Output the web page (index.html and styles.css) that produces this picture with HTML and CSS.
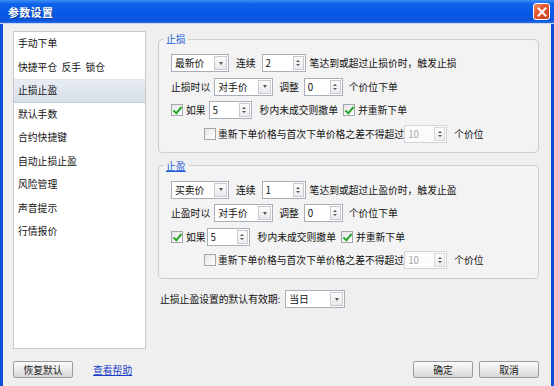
FILE: index.html
```html
<!DOCTYPE html>
<html lang="zh-CN">
<head>
    <meta charset="UTF-8">
    <title>参数设置</title>
    <link rel="stylesheet" href="styles.css">
</head>
<body>

<div class="window">
    <div class="titlebar">
        <span class="title">参数设置</span>
        <span class="close-btn">
            <svg width="10" height="10" viewBox="0 0 10 10"><path d="M1.5 1.5 L8.5 8.5 M8.5 1.5 L1.5 8.5" stroke="#fff" stroke-width="2" stroke-linecap="square"/></svg>
        </span>
    </div>

    <div class="frame">
        <div class="top-row">
            <ul class="sidebar">
                <li>手动下单</li>
                <li>快捷平仓&nbsp; 反手&nbsp; 锁仓</li>
                <li class="active">止损止盈</li>
                <li>默认手数</li>
                <li>合约快捷键</li>
                <li>自动止损止盈</li>
                <li>风险管理</li>
                <li>声音提示</li>
                <li>行情报价</li>
            </ul>

            <div class="panel">
                <fieldset class="group">
                    <legend>止损</legend>
                    <div class="row">
                        <div class="select w58"><span class="value">最新价</span><span class="drop"></span></div>
                        <span class="lbl ml7">连续</span>
                        <div class="spin w44 ml6"><span class="value">2</span><span class="arrows"></span></div>
                        <span class="lbl ml4">笔达到或超过止损价时，触发止损</span>
                    </div>
                    <div class="row">
                        <span class="lbl">止损时以</span>
                        <div class="select w59 ml4"><span class="value">对手价</span><span class="drop"></span></div>
                        <span class="lbl ml6">调整</span>
                        <div class="spin w39 ml5"><span class="value">0</span><span class="arrows"></span></div>
                        <span class="lbl ml6">个价位下单</span>
                    </div>
                    <div class="row">
                        <span class="check on"></span>
                        <span class="lbl ml3">如果</span>
                        <div class="spin w43 ml3"><span class="value">5</span><span class="arrows"></span></div>
                        <span class="lbl ml8">秒内未成交则撤单</span>
                        <span class="check on ml5"></span>
                        <span class="lbl ml3">并重新下单</span>
                    </div>
                    <div class="row indent">
                        <span class="check"></span>
                        <span class="lbl ml2">重新下单价格与首次下单价格之差不得超过</span>
                        <div class="spin w43 disabled"><span class="value">10</span><span class="arrows"></span></div>
                        <span class="lbl ml7">个价位</span>
                    </div>
                </fieldset>

                <fieldset class="group second">
                    <legend class="underline">止盈</legend>
                    <div class="row">
                        <div class="select w58"><span class="value">买卖价</span><span class="drop"></span></div>
                        <span class="lbl ml7">连续</span>
                        <div class="spin w44 ml6"><span class="value">1</span><span class="arrows"></span></div>
                        <span class="lbl ml4">笔达到或超过止盈价时，触发止盈</span>
                    </div>
                    <div class="row">
                        <span class="lbl">止盈时以</span>
                        <div class="select w59 ml4"><span class="value">对手价</span><span class="drop"></span></div>
                        <span class="lbl ml6">调整</span>
                        <div class="spin w39 ml5"><span class="value">0</span><span class="arrows"></span></div>
                        <span class="lbl ml6">个价位下单</span>
                    </div>
                    <div class="row">
                        <span class="check on"></span>
                        <span class="lbl ml3">如果</span>
                        <div class="spin w43 ml1"><span class="value">5</span><span class="arrows"></span></div>
                        <span class="lbl ml8">秒内未成交则撤单</span>
                        <span class="check on ml5"></span>
                        <span class="lbl ml3">并重新下单</span>
                    </div>
                    <div class="row indent">
                        <span class="check"></span>
                        <span class="lbl ml2">重新下单价格与首次下单价格之差不得超过</span>
                        <div class="spin w43 disabled"><span class="value">10</span><span class="arrows"></span></div>
                        <span class="lbl ml7">个价位</span>
                    </div>
                </fieldset>

                <div class="row default-row">
                    <span class="lbl">止损止盈设置的默认有效期:</span>
                    <div class="select w60 ml5"><span class="value">当日</span><span class="drop"></span></div>
                </div>
            </div>
        </div>

        <div class="footer">
            <button class="btn">恢复默认</button>
            <a class="help-link">查看帮助</a>
            <span class="spacer"></span>
            <button class="btn">确定</button>
            <button class="btn ml6">取消</button>
        </div>
    </div>
</div>

</body>
</html>
```

FILE: styles.css
```css
/* Основа */
body {
    margin: 0;
    font-family: 'Noto Sans CJK SC', 'Noto Sans', sans-serif;
    font-size: 9.8px;
    color: #111;
    background: #ffffff;
}
.window {
    width: 554px;
    height: 386px;
    display: flex;
    flex-direction: column;
    background: linear-gradient(90deg, #0a4fd5, #0b5be3 50%, #0a4fd5);
}

/* Заголовок окна */
.titlebar {
    height: 24px;
    display: flex;
    align-items: center;
    padding: 0 3px 0 8px;
    background: linear-gradient(#3c8ef7, #0c62ea 18%, #0858e6 60%, #0a55dc 90%, #2a6fe6);
    border-bottom: 1px solid #c8d7f2;
    box-sizing: border-box;
}
.title {
    color: #fff;
    font-weight: bold;
    font-size: 11px;
    letter-spacing: 0.3px;
    text-shadow: 1px 1px 0 #0a3a9a;
    flex: 1;
}
.close-btn {
    width: 15px;
    height: 15px;
    display: flex;
    align-items: center;
    justify-content: center;
    border: 1px solid #fff;
    border-radius: 3px;
    background: linear-gradient(135deg, #f08a6a, #e2542e 45%, #c9401f);
    margin-right: 1px;
}

/* Рабочая область */
.frame {
    flex: 1;
    margin: 0 3px;
    background: #efefef;
    padding: 7px 12px 0 10px;
}
.top-row {
    display: flex;
    gap: 12px;
}

/* Левое меню */
.sidebar {
    list-style: none;
    margin: 0;
    padding: 0;
    width: 133px;
    height: 318px;
    box-sizing: border-box;
    border: 1px solid #c9c9c9;
    background: #fff;
}
.sidebar li {
    height: 23.5px;
    line-height: 23.5px;
    padding-left: 4px;
    white-space: nowrap;
}
.sidebar li.active {
    background: linear-gradient(#e8edf4, #d7dfea);
    border-top: 1px solid #e0e6ee;
    border-bottom: 1px solid #c9d3e0;
    height: 21.5px;
    line-height: 21.5px;
}

/* Правая панель */
.panel {
    width: 381px;
}
.group {
    margin: 0;
    padding: 7px 0 9px 5px;
    border: 1px solid #cfcfc4;
    border-radius: 4px;
    background: #f3f3f3;
    min-width: 0;
}
.group.second {
    margin-top: 5px;
}
.group legend {
    padding: 0 2px;
    line-height: 16px;
    color: #1d5bd6;
}
.group legend.underline {
    text-decoration: underline;
}
.row {
    display: flex;
    align-items: center;
    height: 18px;
    margin-left: 7px;
    white-space: nowrap;
}
.group .row + .row {
    margin-top: 5.5px;
}
.row.indent {
    padding-left: 33px;
}
.default-row {
    margin: 11px 0 0 2px;
}
.lbl {
    line-height: 18px;
}

/* Выпадающий список */
.select,
.spin {
    display: flex;
    align-items: center;
    height: 18px;
    box-sizing: border-box;
    border: 1px solid #a9b0b9;
    background: #fff;
    padding-left: 3px;
}
.select .value,
.spin .value {
    flex: 1;
}
.drop {
    width: 13px;
    height: 14px;
    margin-right: 1px;
    box-sizing: border-box;
    border: 1px solid #c7cbd1;
    background: linear-gradient(#fbfbfb, #e9e9e9);
    display: flex;
    align-items: center;
    justify-content: center;
}
.drop::after {
    content: '';
    border-left: 2.5px solid transparent;
    border-right: 2.5px solid transparent;
    border-top: 3px solid #555;
}

/* Счётчик */
.arrows {
    width: 11px;
    height: 14px;
    margin-right: 1px;
    box-sizing: border-box;
    border: 1px solid #c7cbd1;
    background: linear-gradient(#fbfbfb, #ececec);
    display: flex;
    flex-direction: column;
    align-items: center;
    justify-content: center;
    gap: 2px;
}
.arrows::before {
    content: '';
    border-left: 2px solid transparent;
    border-right: 2px solid transparent;
    border-bottom: 2px solid #555;
}
.arrows::after {
    content: '';
    border-left: 2px solid transparent;
    border-right: 2px solid transparent;
    border-top: 2px solid #555;
}
.spin.disabled {
    border-color: #d2d4d8;
    color: #a8a8a8;
    background: #fbfbfb;
}
.spin.disabled .arrows {
    border-color: #d8dade;
}

/* Флажки */
.check {
    width: 12px;
    height: 12px;
    box-sizing: border-box;
    border: 1px solid #a4a8ae;
    background: linear-gradient(135deg, #e6e6e6, #ffffff);
    position: relative;
    flex: none;
}
.check.on::after {
    content: '';
    position: absolute;
    left: 3px;
    top: 0px;
    width: 3px;
    height: 7px;
    border-right: 2px solid #28a828;
    border-bottom: 2px solid #28a828;
    transform: rotate(40deg);
}

/* Ширины */
.w39 { width: 39px; }
.w43 { width: 43px; }
.w44 { width: 44px; }
.w58 { width: 58px; }
.w59 { width: 59px; }
.w60 { width: 60px; }
.ml1 { margin-left: 1px; }
.ml2 { margin-left: 2px; }
.ml3 { margin-left: 3px; }
.ml4 { margin-left: 4px; }
.ml5 { margin-left: 5px; }
.ml6 { margin-left: 6px; }
.ml7 { margin-left: 7px; }
.ml8 { margin-left: 8px; }

/* Нижняя панель */
.footer {
    display: flex;
    align-items: center;
    margin-top: 12px;
    padding-right: 0;
}
.btn {
    width: 60px;
    height: 17px;
    padding: 0;
    font-family: inherit;
    font-size: 9.8px;
    color: #222;
    border: 1px solid #9c9c9c;
    border-radius: 2px;
    background: linear-gradient(#fbfbfb, #e6e6e6 60%, #d6d6d6);
}
.help-link {
    margin-left: 20px;
    color: #1a3fc8;
    text-decoration: underline;
}
.spacer {
    flex: 1;
}
```
